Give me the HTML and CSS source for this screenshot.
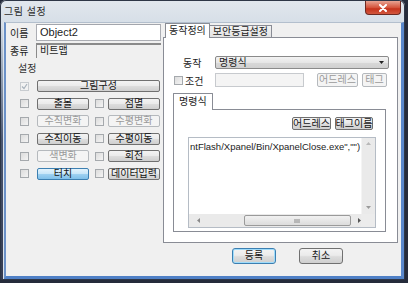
FILE: index.html
```html
<!DOCTYPE html>
<html lang="ko">
<head>
<meta charset="utf-8">
<title>그림 설정</title>
<link rel="stylesheet" href="styles.css">
</head>
<body>
<div class="window">
  <div class="titlebar">
    <span class="title">그림 설정</span>
    <span class="close"><svg width="10" height="8" viewBox="0 0 10 8"><path d="M2 1 L8 7 M8 1 L2 7" stroke="#fff" stroke-width="2" stroke-linecap="round"/></svg></span>
  </div>
  <div class="client">
    <div class="main">
      <div class="left">
        <div class="field-row"><span class="lbl">이름</span><div class="input">Object2</div></div>
        <div class="field-row r2"><span class="lbl">종류</span><div class="input ro">비트맵</div></div>
        <div class="group">
          <div class="legend">설정</div>
          <div class="opts">
            <span class="cb checked"><svg width="7" height="7" viewBox="0 0 7 7"><path d="M1 3.5 L3 5.5 L6 1" fill="none" stroke="#a9b3bd" stroke-width="1.2"/></svg></span>
            <span class="btn span3">그림구성</span>
            <span class="cb"></span><span class="btn">출몰</span><span class="cb c2"></span><span class="btn">점멸</span>
            <span class="cb"></span><span class="btn dis">수직변화</span><span class="cb c2"></span><span class="btn dis">수평변화</span>
            <span class="cb"></span><span class="btn">수직이동</span><span class="cb c2"></span><span class="btn">수평이동</span>
            <span class="cb"></span><span class="btn dis">색변화</span><span class="cb c2"></span><span class="btn">회전</span>
            <span class="cb"></span><span class="btn hot">터치</span><span class="cb c2"></span><span class="btn">데이터입력</span>
          </div>
        </div>
      </div>
      <div class="right">
        <div class="tabs">
          <span class="tab active">동작정의</span>
          <span class="tab">보안등급설정</span>
        </div>
        <div class="panel">
          <div class="row act">
            <span class="rlbl">동작</span>
            <div class="select">명령식<svg width="5" height="3" viewBox="0 0 5 3"><path d="M0 0 H5 L2.5 3 Z" fill="#222"/></svg></div>
          </div>
          <div class="row cond">
            <span class="rlbl"><span class="cb"></span>조건</span>
            <div class="input dinput"></div>
            <span class="btn dis b-addr">어드레스</span>
            <span class="btn dis b-tag">태그</span>
          </div>
          <div class="subtabs"><span class="tab active sub">명령식</span></div>
          <div class="subpanel">
            <div class="btnrow">
              <span class="btn b-addr2">어드레스</span>
              <span class="btn b-tag2">태그이름</span>
            </div>
            <div class="textarea">
              <div class="ta-top">
                <div class="ta-text">ntFlash/Xpanel/Bin/XpanelClose.exe","")</div>
                <div class="vscroll">
                  <svg width="5" height="3" viewBox="0 0 5 3"><path d="M0 3 H5 L2.5 0 Z" fill="#b8b8b8"/></svg>
                  <svg width="5" height="3" viewBox="0 0 5 3"><path d="M0 0 H5 L2.5 3 Z" fill="#9a9a9a"/></svg>
                </div>
              </div>
              <div class="hscroll">
                <svg width="3" height="5" viewBox="0 0 3 5"><path d="M3 0 V5 L0 2.5 Z" fill="#8a8a8a"/></svg>
                <span class="thumb"><svg width="7" height="4" viewBox="0 0 7 4"><path d="M1 0 V4 M3 0 V4 M5 0 V4" stroke="#8a8a8a" stroke-width="1"/></svg></span>
                <svg width="3" height="5" viewBox="0 0 3 5"><path d="M0 0 V5 L3 2.5 Z" fill="#555"/></svg>
                <span class="corner"></span>
              </div>
            </div>
          </div>
        </div>
      </div>
    </div>
    <div class="footer">
      <span class="btn fbtn default">등록</span>
      <span class="btn fbtn">취소</span>
    </div>
  </div>
</div>
</body>
</html>
```

FILE: styles.css
```css
* { box-sizing: border-box; margin: 0; padding: 0; }
html, body { width: 408px; height: 283px; overflow: hidden; }
body {
  background: #252b3b;
  font-family: "Liberation Sans", "Noto Sans CJK KR", sans-serif;
  font-size: 10px;
  color: #1c1c1c;
}
.window {
  width: 405px;
  height: 280px;
  border-radius: 6px 6px 2px 2px;
  background: linear-gradient(#e2e7ed, #d6dee7 24px, #9aa7b9 70px, #4a5670 140px, #343b50);
  display: flex;
  flex-direction: column;
  padding: 0 1px 1px 4px;
  box-shadow: inset 0 0 0 1px #2e3646;
}
.titlebar {
  height: 22px;
  display: flex;
  justify-content: space-between;
  align-items: flex-start;
}
.title {
  margin: 3px 0 0 0;
  font-size: 10px;
  color: #2b2b2b;
  letter-spacing: 0.5px;
}
.close {
  width: 36px;
  height: 14px;
  margin-right: 3px;
  margin-top: 1px;
  border: 1px solid #6d2a22;
  border-top: none;
  border-radius: 0 0 4px 4px;
  background: linear-gradient(#e8a493, #d4553d 50%, #c5331c 60%, #d2583f);
  display: flex;
  align-items: center;
  justify-content: center;
}
.client {
  flex: 1;
  background: #f0f0f0;
  border-left: 2px solid #6b91c8;
  border-right: 3px solid #5a88cc;
  border-bottom: 3px solid #4f80c6;
  border-top: 1px solid #b3bfcd;
  box-shadow: -1px 0 0 #dde4ec;
  display: flex;
  flex-direction: column;
}
.main { display: flex; height: 220px; }
.left { width: 157px; padding: 1px 0 0 3px; }
.field-row { display: flex; align-items: center; height: 17px; }
.field-row.r2 { margin-top: 2px; height: 15px; }
.lbl { width: 27px; font-size: 10px; padding-left: 1px; }
.input {
  width: 125px;
  height: 100%;
  background: #fff;
  border: 1px solid #abadb3;
  border-top-color: #a3a6ad;
  padding: 1px 0 0 3px;
  font-size: 11px;
  line-height: 13px;
}
.input.ro {
  background: #f0f0f0;
  border: none;
  border-top: 2px solid #8a8a8a;
  border-left: 1px solid #8a8a8a;
  padding-top: 0;
  font-size: 10px;
  line-height: 12px;
}
.group { margin-top: 5px; }
.legend { padding-left: 9px; height: 12px; line-height: 12px; color: #333; }
.opts {
  margin: 5px 0 0 11px;
  display: grid;
  grid-template-columns: 17px 52px 19px 52px;
  grid-auto-rows: 12px;
  row-gap: 5.5px;
  align-items: center;
}
.cb {
  width: 9px;
  height: 9px;
  border: 1px solid #a5a9ad;
  background: linear-gradient(135deg, #dcdcdc, #f4f4f4);
  display: inline-flex;
  align-items: center;
  justify-content: center;
}
.cb.c2 { margin-left: 6px; }
.cb.checked { background: #f2f2f2; border-color: #c8ccd0; }
.btn {
  height: 12px;
  border: 1px solid #707070;
  border-radius: 2px;
  background: linear-gradient(#f3f3f3, #ebebeb 45%, #dcdcdc 55%, #cfcfcf);
  display: flex;
  align-items: center;
  justify-content: center;
  font-size: 10px;
  line-height: 10px;
  color: #141414;
  white-space: nowrap;
}
.btn.span3 { grid-column: 2 / 5; }
.btn.dis {
  background: #f4f4f4;
  border-color: #b5b9bd;
  color: #9a9a9a;
}
.btn.hot {
  background: linear-gradient(#e3f3fd, #c9e7f9 45%, #9dd0f1 55%, #7fc0ea);
  border-color: #3c7fb1;
}
.right { flex: 1; padding: 0 3px 0 0; display: flex; flex-direction: column; }
.tabs { display: flex; align-items: flex-end; height: 14px; padding-left: 2px; position: relative; z-index: 1; }
.tab {
  height: 12px;
  padding: 0 3px;
  border: 1px solid #898c95;
  border-bottom: none;
  background: linear-gradient(#f2f2f2, #e3e3e3);
  font-size: 10px;
  line-height: 11px;
  margin-left: -1px;
}
.tab.active {
  height: 15px;
  margin-bottom: -1px;
  margin-left: 0;
  padding: 1px 3px 0;
  background: #fff;
  border-radius: 1px 1px 0 0;
}
.panel {
  flex: 1;
  background: #fff;
  border: 1px solid #898c95;
  padding: 0 0 0 9px;
  display: flex;
  flex-direction: column;
}
.row { display: flex; align-items: center; }
.row.act { margin-top: 18px; height: 13px; }
.row.cond { margin-top: 4px; height: 14px; }
.rlbl { width: 42px; display: flex; align-items: center; }
.row.act .rlbl { padding-left: 10px; }
.rlbl .cb { margin: 0 2px 0 1px; }
.select {
  width: 174px;
  height: 13px;
  border: 1px solid #8a8a8a;
  border-radius: 2px;
  background: linear-gradient(#f3f3f3, #e6e6e6 50%, #d8d8d8 55%, #d0d0d0);
  display: flex;
  justify-content: space-between;
  align-items: center;
  padding: 0 4px 0 3px;
  line-height: 11px;
}
.dinput {
  width: 89px;
  height: 14px;
  background: #f4f4f4;
  border-color: #c7cace;
}
.b-addr { width: 41px; height: 14px; margin-left: 13px; }
.b-tag { width: 25px; height: 14px; margin-left: 4px; }
.subtabs { margin-top: 6px; height: 16px; display: flex; align-items: flex-end; position: relative; z-index: 1; }
.tab.sub { height: 17px; padding: 2px 5px 0; }
.subpanel {
  width: 213px;
  height: 123px;
  border: 1px solid #898c95;
  background: #fff;
  padding: 7px 0 0 14px;
}
.btnrow { display: flex; justify-content: flex-end; gap: 4px; padding-right: 12px; }
.b-addr2 { width: 39px; height: 13px; }
.b-tag2 { width: 38px; height: 13px; }
.textarea {
  margin-top: 7px;
  width: 188px;
  height: 91px;
  border: 1px solid #b5bcc5;
  display: flex;
  flex-direction: column;
}
.ta-top { flex: 1; display: flex; min-height: 0; }
.ta-text {
  flex: 1;
  min-width: 0;
  padding: 3px 0 0 1px;
  font-size: 9.5px;
  line-height: 12px;
  white-space: nowrap;
  overflow: hidden;
}
.vscroll {
  width: 14px;
  background: #eaeaea;
  border-left: 1px solid #f4f4f4;
  display: flex;
  flex-direction: column;
  justify-content: space-between;
  align-items: center;
  padding: 4px 0 5px;
}
.hscroll {
  height: 13px;
  background: #eaeaea;
  display: flex;
  align-items: center;
  padding-left: 8px;
}
.thumb {
  width: 107px;
  height: 11px;
  margin-left: 44px;
  border: 1px solid #9a9a9a;
  border-radius: 2px;
  background: linear-gradient(#f1f1f1, #dcdcdc);
  display: flex;
  align-items: center;
  justify-content: center;
  margin-right: 7px;
}
.corner { margin-left: auto; width: 14px; height: 13px; background: #ececec; }
.footer {
  flex: 1;
  display: flex;
  justify-content: flex-end;
  align-items: flex-start;
  gap: 23px;
  padding: 5px 58px 0 0;
}
.fbtn { width: 44px; height: 16px; border-radius: 3px; }
.fbtn.default {
  border-color: #3c7fb1;
  box-shadow: inset 0 0 0 1px #9fdcfb;
}
```
